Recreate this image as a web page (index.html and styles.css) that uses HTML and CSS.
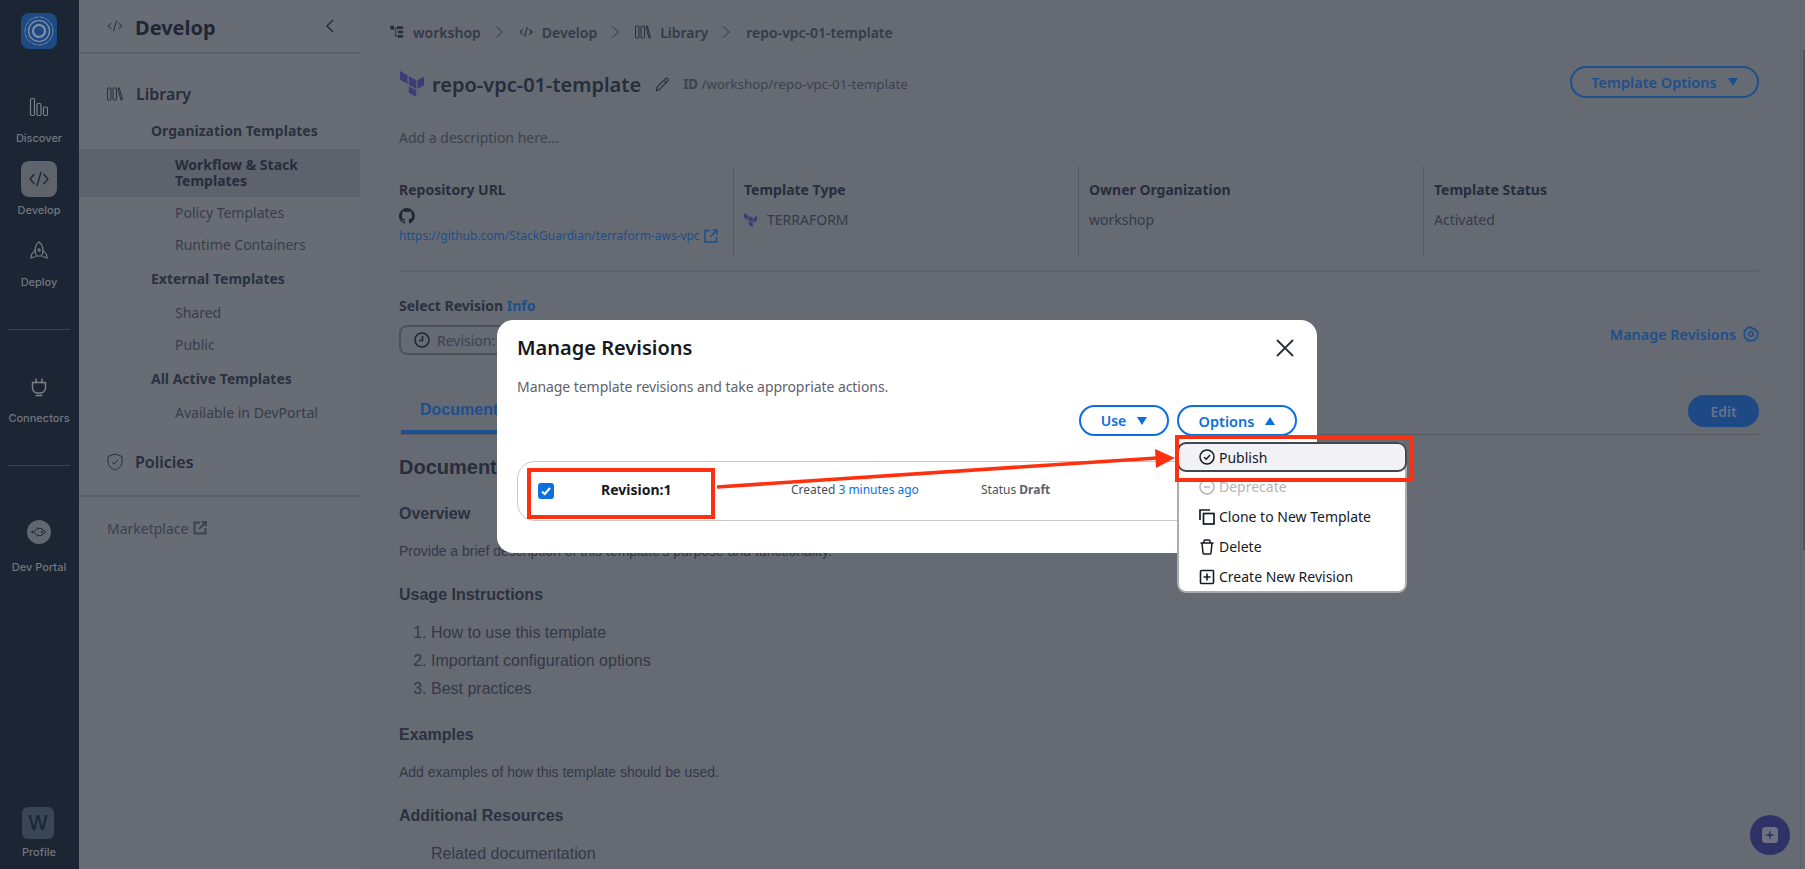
FILE: index.html
```html
<!DOCTYPE html>
<html lang="en">
<head>
<meta charset="utf-8">
<title>Manage Revisions</title>
<link rel="stylesheet" href="styles.css">
</head>
<body>
<div class="app">
  <nav class="rail">
    <div class="logo">
      <svg viewBox="0 0 36 36" width="36" height="36" fill="none" stroke="#8a93a5"><circle cx="18" cy="18" r="6" stroke-width="2"/><circle cx="18" cy="18" r="10.5" stroke-width="1.2"/><circle cx="18" cy="18" r="14" stroke-width=".8" stroke-dasharray="5 1"/></svg>
    </div>
    <a class="rail-item">
      <span class="rail-icon"><svg viewBox="0 0 20 20" width="20" height="20" fill="none" stroke="#7d8087" stroke-width="1.2"><rect x="1.5" y="1.5" width="4" height="17" rx="1.2"/><rect x="8" y="6.5" width="4" height="12" rx="1.2"/><rect x="14.5" y="10" width="4" height="8.5" rx="1.2"/></svg></span>
      <span class="rail-label">Discover</span>
    </a>
    <a class="rail-item">
      <span class="rail-icon active"><svg viewBox="0 0 20 20" width="20" height="20" fill="none" stroke="#1d2634" stroke-width="1.3"><path d="M5.5 5 1 10l4.500 5M14.500 5 19 10l-4.500 5M12 3 8 17"/></svg></span>
      <span class="rail-label">Develop</span>
    </a>
    <a class="rail-item">
      <span class="rail-icon"><svg viewBox="0 0 20 20" width="20" height="20" fill="none" stroke="#7d8087" stroke-width="1.100"><path d="M10 1c2.800 2.200 4 5.200 4 8.500 0 2-1 4-1.500 5.500h-5C7 13.500 6 11.500 6 9.500 6 6.200 7.200 3.200 10 1Z"/><path d="M6.500 9 2.500 13.500 2 17l4.500-1.500M13.500 9l4 4.500.5 3.500-4.500-1.500"/><circle cx="10" cy="9" r="1.100"/></svg></span>
      <span class="rail-label">Deploy</span>
    </a>
    <hr class="rail-rule">
    <a class="rail-item">
      <span class="rail-icon"><svg viewBox="0 0 20 20" width="20" height="20" fill="none" stroke="#7d8087" stroke-width="1.500"><path d="M7 1.500v5M13 1.500v5M3.500 5.500h13v5.500a5 5 0 0 1-5 5h-3a5 5 0 0 1-5-5Z"/><path d="M6.500 18.500h7"/></svg></span>
      <span class="rail-label">Connectors</span>
    </a>
    <hr class="rail-rule">
    <a class="rail-item portal">
      <span class="rail-icon"><span class="portal-disc"><svg viewBox="0 0 20 20" width="20" height="20" fill="none" stroke="#1d2634" stroke-width="1"><path d="M5 10c1.500-3 5-4.500 8-3l3.500 3-3.500 3c-3 1.500-6.500 0-8-3Z"/><path d="M8 5.500 10 7M8.500 14.500 10 13M3.500 8.500v3M2 9.300v1.400"/><circle cx="13" cy="10" r=".7"/></svg></span></span>
      <span class="rail-label">Dev Portal</span>
    </a>
    <a class="rail-item profile">
      <span class="profile-box">W</span>
      <span class="rail-label">Profile</span>
    </a>
  </nav>

  <aside class="side">
    <header class="side-head">
      <svg viewBox="0 0 16 16" width="16" height="16" fill="none" stroke="#262d3b" stroke-width="1"><path d="M4.500 5 1 8l3.500 3M11.500 5 15 8l-3.500 3M9.500 2.500l-3 11"/></svg>
      <h2 class="side-title">Develop</h2>
      <svg class="side-back" viewBox="0 0 10 16" width="10" height="16" fill="none" stroke="#262d3b" stroke-width="1.500"><path d="M8 2 2 8l6 6"/></svg>
    </header>
    <div class="side-body">
      <div class="lib-head">
        <svg viewBox="0 0 16 14" width="16" height="14" fill="none" stroke="#262d3b" stroke-width="1"><rect x=".5" y="1" width="3.500" height="12" rx=".8"/><rect x="6" y="1" width="3.500" height="12" rx=".8"/><path d="m11 1 1.200 0 3.300 11.500-1.600.5Z"/></svg>
        <span>Library</span>
      </div>
      <div class="nav-group">Organization Templates</div>
      <a class="nav-link current">Workflow &amp; Stack Templates</a>
      <a class="nav-link">Policy Templates</a>
      <a class="nav-link">Runtime Containers</a>
      <div class="nav-group">External Templates</div>
      <a class="nav-link">Shared</a>
      <a class="nav-link">Public</a>
      <div class="nav-group">All Active Templates</div>
      <a class="nav-link">Available in DevPortal</a>
      <div class="policies">
        <svg viewBox="0 0 16 18" width="16" height="18" fill="none" stroke="#262d3b" stroke-width="1"><path d="M8 1 15 3.500V9c0 4-3 6.500-7 8-4-1.500-7-4-7-8V3.500Z"/><path d="m5 9 2.200 2L11 7"/></svg>
        <span>Policies</span>
      </div>
      <a class="market">Marketplace
        <svg viewBox="0 0 14 14" width="14" height="14" fill="none" stroke="#3a4150" stroke-width="2"><path d="M7 1.500H1.500v11h11V7"/><path d="M6 8 12.500 1.500M8.500 1h4.500v4.500" stroke-width="1.800"/></svg>
      </a>
    </div>
  </aside>

  <main class="main">
    <div class="crumbs">
      <svg viewBox="0 0 16 16" width="14" height="14" fill="#262d3b"><circle cx="2.500" cy="3" r="2.500"/><path d="M8 1.500h7v3H8zM9 6.500h6v3H9zM9 11.500h6v3H9z"/><path d="M6 3h2v1H7v8h2v1H6z"/></svg>
      <span class="crumb">workshop</span>
      <span class="chev"></span>
      <svg viewBox="0 0 16 16" width="14" height="14" fill="none" stroke="#262d3b" stroke-width="1.200"><path d="M4.500 5 1 8l3.500 3M11.500 5 15 8l-3.500 3M9.500 2.500l-3 11"/></svg>
      <span class="crumb">Develop</span>
      <span class="chev"></span>
      <svg viewBox="0 0 16 14" width="16" height="14" fill="none" stroke="#262d3b" stroke-width="1"><rect x=".5" y="1" width="3.500" height="12" rx=".8"/><rect x="6" y="1" width="3.500" height="12" rx=".8"/><path d="m11 1 1.200 0 3.300 11.500-1.600.5Z"/></svg>
      <span class="crumb">Library</span>
      <span class="chev"></span>
      <span class="crumb">repo-vpc-01-template</span>
    </div>

    <div class="title-row">
      <svg class="tf-big" viewBox="0 0 24 26" width="24" height="26" fill="#3f3a78"><path d="M0 0 7.500 4.300v8.700L0 8.700zM8.800 5 16.300 9.300V18L8.800 13.700zM17.500 9.300 24 5.500v8.700l-6.500 3.800zM8.800 15.300l7.500 4.300V26l-7.500-4.300z"/></svg>
      <h1 class="page-title">repo-vpc-01-template</h1>
      <svg class="pencil" viewBox="0 0 16 16" width="15" height="15" fill="none" stroke="#2b3240" stroke-width="1.300"><path d="M2 11 11 2c1-1 2-.8 2.600-.2s.8 1.600-.2 2.600L4.500 13.500 1.500 14.500Z"/><path d="M9.500 3.500l3 3"/></svg>
      <span class="page-id"><b>ID</b> /workshop/repo-vpc-01-template</span>
      <button class="btn-outline-dim">Template Options <span class="tri-down"></span></button>
    </div>

    <p class="desc">Add a description here...</p>

    <div class="meta">
      <div class="meta-col">
        <div class="meta-label">Repository URL</div>
        <svg class="gh" viewBox="0 0 16 16" width="16" height="16" fill="#20262f"><path d="M8 0a8 8 0 0 0-2.500 15.600c.4.100.5-.2.500-.4v-1.400c-2.200.5-2.700-1-2.700-1-.4-.9-.9-1.200-.9-1.200-.7-.5.100-.5.100-.5.800.1 1.200.8 1.200.8.700 1.200 1.900.9 2.300.7.100-.5.300-.9.500-1.100-1.800-.2-3.600-.9-3.600-4 0-.9.300-1.600.8-2.100-.1-.2-.4-1 .1-2.100 0 0 .7-.2 2.200.8a7.600 7.600 0 0 1 4 0c1.500-1 2.200-.8 2.200-.8.400 1.100.2 1.900.1 2.100.5.600.8 1.300.8 2.100 0 3.100-1.900 3.700-3.700 3.900.3.300.6.800.6 1.500v2.200c0 .2.100.5.600.4A8 8 0 0 0 8 0Z"/></svg>
        <a class="repo-link">https://github.com/StackGuardian/terraform-aws-vpc
          <svg viewBox="0 0 14 14" width="14" height="14" fill="none" stroke="#1d4f8c" stroke-width="1.600"><path d="M6 1.500H1v11.500h11.500V8"/><path d="M6.500 7.500 12.500 1.500M8.500 1h4.500v4.500"/></svg>
        </a>
      </div>
      <div class="meta-col divided">
        <div class="meta-label">Template Type</div>
        <div class="meta-value"><svg viewBox="0 0 24 26" width="13" height="14" fill="#3f3a78"><path d="M0 0 7.500 4.300v8.700L0 8.700zM8.800 5 16.300 9.300V18L8.800 13.700zM17.500 9.300 24 5.500v8.700l-6.500 3.800zM8.800 15.300l7.500 4.300V26l-7.500-4.300z"/></svg>TERRAFORM</div>
      </div>
      <div class="meta-col divided">
        <div class="meta-label">Owner Organization</div>
        <div class="meta-value">workshop</div>
      </div>
      <div class="meta-col divided">
        <div class="meta-label">Template Status</div>
        <div class="meta-value">Activated</div>
      </div>
    </div>

    <div class="rev-label">Select Revision <a class="info">Info</a></div>
    <div class="rev-row">
      <div class="rev-select">
        <svg viewBox="0 0 16 16" width="16" height="16" fill="none" stroke="#20262f" stroke-width="1.500"><circle cx="8" cy="8" r="7"/><path d="M8.500 4v4.500H5"/></svg>
        Revision:1
      </div>
      <a class="manage-link">Manage Revisions
        <svg viewBox="0 0 16 16" width="16" height="16" fill="none" stroke="#1d4f8c" stroke-width="1.600"><path d="M8 1l1.400 1.800 2.300-.4.800 2.200 2.200.8-.4 2.300L15 8l-.7 1.300.4 2.300-2.200.8-.8 2.200-2.300-.4L8 15l-1.400-.8-2.300.4-.8-2.200-2.200-.8.400-2.300L1 8l.7-1.300-.4-2.300 2.200-.8.8-2.200 2.300.4Z"/><circle cx="8" cy="8" r="2.200"/></svg>
      </a>
    </div>

    <div class="tabs">
      <span class="tab">Documentation</span>
      <button class="btn-edit">Edit</button>
    </div>

    <article class="doc">
      <h2>Documentation</h2>
      <h3>Overview</h3>
      <p>Provide a brief description of this template's purpose and functionality.</p>
      <h3>Usage Instructions</h3>
      <ol>
        <li>How to use this template</li>
        <li>Important configuration options</li>
        <li>Best practices</li>
      </ol>
      <h3>Examples</h3>
      <p>Add examples of how this template should be used.</p>
      <h3>Additional Resources</h3>
      <ul>
        <li>Related documentation</li>
      </ul>
    </article>
  </main>
  <div class="gutter"><div class="thumb"></div></div>
</div>

<section class="modal">
  <h2 class="modal-title">Manage Revisions</h2>
  <svg class="modal-close" viewBox="0 0 18 18" width="18" height="18" fill="none" stroke="#2a2f3a" stroke-width="1.800"><path d="M1 1l16 16M17 1 1 17"/></svg>
  <p class="modal-sub">Manage template revisions and take appropriate actions.</p>
  <div class="modal-actions">
    <button class="btn-blue btn-use">Use <span class="tri-down"></span></button>
    <button class="btn-blue btn-opts">Options <span class="tri-up"></span></button>
  </div>
  <div class="rev-card">
    <span class="check"><svg viewBox="0 0 16 16" width="16" height="16" fill="none" stroke="#fff" stroke-width="2"><path d="m4 8.500 2.800 2.500L12 5"/></svg></span>
    <span class="rev-name">Revision:1</span>
    <span class="rev-created">Created <a>3 minutes ago</a></span>
    <span class="rev-status">Status <b>Draft</b></span>
  </div>
</section>

<div class="menu">
  <div class="menu-item selected">
    <svg viewBox="0 0 16 16" width="16" height="16" fill="none" stroke="#16191f" stroke-width="1.500"><circle cx="8" cy="8" r="7"/><path d="m5 8.300 2.200 2L11 6"/></svg>Publish
  </div>
  <div class="menu-item disabled">
    <svg viewBox="0 0 16 16" width="16" height="16" fill="none" stroke="#b5b5ba" stroke-width="1.500"><circle cx="8" cy="8" r="7"/><path d="M5 8h6"/></svg>Deprecate
  </div>
  <div class="menu-item">
    <svg viewBox="0 0 16 16" width="16" height="16" fill="none" stroke="#16191f" stroke-width="1.700"><path d="M1 11V1h10"/><rect x="4.500" y="4.500" width="10.500" height="10.500"/></svg>Clone to New Template
  </div>
  <div class="menu-item">
    <svg viewBox="0 0 16 16" width="16" height="16" fill="none" stroke="#16191f" stroke-width="1.500"><path d="M1.500 4h13M5 4V2a1 1 0 0 1 1-1h4a1 1 0 0 1 1 1v2M3 4l1 10a1 1 0 0 0 1 1h6a1 1 0 0 0 1-1l1-10"/></svg>Delete
  </div>
  <div class="menu-item">
    <svg viewBox="0 0 16 16" width="16" height="16" fill="none" stroke="#16191f" stroke-width="1.600"><rect x="1.500" y="1.500" width="13" height="13" rx="1"/><path d="M8 4.500v7M4.500 8h7"/></svg>Create New Revision
  </div>
</div>

<div class="mark mark-rev"></div>
<div class="mark mark-pub"></div>
<svg class="arrow" viewBox="0 0 470 40" width="470" height="40" fill="#ff3010" stroke="none">
  <path d="M2 34.200 442 5.200 442 8.800 2 37.800Z"/>
  <path d="M440 -2 460 7 441 17Z"/>
</svg>

<div class="fab"><svg viewBox="0 0 16 16" width="16" height="16"><rect width="16" height="16" rx="3.500" fill="#6f7180"/><path d="M8 2.500 9 7l4.500 1L9 9l-1 4.500L7 9 2.500 8 7 7Z" fill="#2e3266"/></svg></div>
</body>
</html>
```

FILE: styles.css
```css
* { box-sizing: border-box; }
html, body { margin: 0; height: 100%; overflow: hidden; }
body { font-family: "Noto Sans", "Open Sans", sans-serif; background: #666a73; color: #262d3b; position: relative; }
svg { flex: none; display: block; }
h1, h2, h3, p { margin: 0; }

.app { display: flex; height: 869px; }

/* icon rail */
.rail { width: 79px; flex: none; background: #1b2533; display: flex; flex-direction: column; align-items: center; padding: 13px 1px 0 0; }
.logo { width: 36px; height: 36px; border-radius: 8px; background: #1e4a86; margin-bottom: 40px; }
.rail-item { display: flex; flex-direction: column; align-items: center; width: 100%; margin-bottom: 15px; }
.rail-icon { width: 36px; height: 36px; display: flex; align-items: center; justify-content: center; border-radius: 8px; }
.rail-icon.active { background: #5f636b; }
.rail-label { font-family: Inter, sans-serif; font-size: 11px; font-weight: 500; line-height: 16px; margin-top: 5px; color: #74777f; white-space: nowrap; }
.rail-rule { width: 62px; border: 0; border-top: 1px solid #3a4350; margin: 24px 0 39px; flex: none; }
.portal { margin: 9px 0 0; }
.portal-disc { width: 24px; height: 24px; border-radius: 50%; background: #62666e; display: flex; align-items: center; justify-content: center; }
.portal .rail-label { margin-top: 9px; }
.profile { margin-top: auto; margin-bottom: 9px; }
.profile-box { width: 32px; height: 32px; border-radius: 6px; background: #3b4654; color: #1d2634; font-family: Inter, sans-serif; font-weight: 500; font-size: 20px; line-height: 32px; text-align: center; margin-left: -2px; }
.profile .rail-label { margin-top: 5px; }

/* second column */
.side { width: 281px; flex: none; background: #686c74; display: flex; flex-direction: column; }
.side-head { height: 54px; flex: none; display: flex; align-items: center; gap: 12px; padding: 0 25px 0 28px; border-bottom: 2px solid #5d616b; }
.side-title { font-size: 20px; font-weight: 700; color: #1f2735; line-height: 24px; margin-top: 4px; }
.side-back { margin-left: auto; }
.side-body { padding-top: 29px; }
.lib-head { display: flex; align-items: center; gap: 13px; padding-left: 28px; height: 22px; font-size: 16px; font-weight: 600; color: #262d3b; }
.nav-group { padding-left: 72px; height: 34px; line-height: 34px; margin: 1px 0; font-size: 14px; font-weight: 700; color: #2a3140; }
.lib-head + .nav-group { margin-top: 9px; }
.nav-link { display: block; padding-left: 96px; padding-right: 40px; height: 32px; line-height: 32px; font-size: 14px; color: #373d4b; }
.nav-link.current { height: 48px; line-height: 16px; padding-top: 8px; font-weight: 700; background: #5e626c; color: #262d3b; }
.policies { display: flex; align-items: center; gap: 12px; padding-left: 28px; height: 68px; border-bottom: 2px solid #5d616b; font-size: 16px; font-weight: 600; color: #262d3b; }
.market { display: flex; align-items: center; gap: 5px; padding-left: 28px; margin-top: 20px; height: 22px; font-size: 14px; color: #3a4150; }

/* main column */
.main { flex: 1; min-width: 0; padding: 0 41px 0 39px; background: #666a73; }
.gutter { width: 5px; flex: none; margin-top: 43px; border-left: 1px solid #5d616b; }
.thumb { width: 2px; height: 500px; margin: 7px 0 0 auto; background: #4f535c; }
.crumbs { display: flex; align-items: center; height: 22px; margin-top: 21px; font-size: 14px; font-weight: 600; color: #343a48; }
.crumbs svg { margin-right: 9px; }
.crumbs > svg:first-child { margin-left: -9px; }
.crumb { white-space: nowrap; }
.chev { width: 8px; height: 8px; border-top: 1.500px solid #3f4553; border-right: 1.500px solid #3f4553; transform: rotate(45deg); margin: 0 18px 0 12px; flex: none; }
.title-row { display: flex; align-items: center; height: 32px; margin-top: 25px; }
.tf-big { margin-left: 1px; }
.page-title { font-size: 20px; font-weight: 600; color: #262d3b; margin-left: 8px; white-space: nowrap; }
.pencil { margin-left: 14px; }
.page-id { font-size: 13.3px; color: #3c4250; margin-left: 13px; white-space: nowrap; }
.page-id b { font-weight: 700; }
.btn-outline-dim { margin: -4px 0 0 auto; width: 189px; height: 32px; border-radius: 16px; background: transparent; border: 2px solid #1d4f8c; color: #1d4f8c; font-family: inherit; font-size: 14.5px; font-weight: 600; display: flex; align-items: center; justify-content: center; gap: 11px; padding: 0; }
.tri-down, .tri-up { display: inline-block; width: 0; height: 0; border-left: 5.500px solid transparent; border-right: 5.500px solid transparent; flex: none; }
.tri-down { border-top: 8px solid currentColor; }
.tri-up { border-bottom: 8px solid currentColor; }
.desc { margin-top: 28px; font-size: 14px; line-height: 20px; color: #3c4250; }
.meta { display: grid; grid-template-columns: repeat(4, 345px); height: 90px; margin-top: 18px; width: 100%; }
.meta-col { padding-top: 14px; }
.meta-col.divided { border-left: 1px solid #565a64; margin-left: -11px; padding-left: 10px; margin-right: 11px; }
.meta-label { font-size: 14px; line-height: 20px; font-weight: 700; color: #262d3b; }
.gh { margin-top: 8px; }
.repo-link { display: flex; align-items: center; gap: 4px; font-size: 12px; line-height: 16px; margin-top: 4px; color: #1d4f8c; white-space: nowrap; }
.meta-value { display: flex; align-items: center; gap: 10px; font-size: 14px; line-height: 20px; margin-top: 10px; color: #343a48; }
.rev-label { height: 46px; margin-top: 14px; padding-top: 24px; border-top: 2px solid #5d616b; font-size: 14px; line-height: 20px; font-weight: 700; color: #2a3140; }
.info { color: #1d4f8c; }
.rev-row { display: flex; align-items: flex-start; justify-content: space-between; height: 30px; margin-top: 9px; }
.rev-select { display: flex; align-items: center; gap: 7px; width: 220px; height: 30px; padding-left: 13px; border: 2px solid #4c505a; border-radius: 8px; font-size: 14px; color: #3c4250; }
.manage-link { display: flex; align-items: center; gap: 7px; height: 20px; margin-top: -1px; font-size: 14.4px; font-weight: 600; color: #1d4f8c; }
.tabs { display: flex; align-items: flex-start; justify-content: space-between; height: 80px; padding-top: 43px; border-bottom: 1px solid #575b65; }
.tab { font-family: "Liberation Sans", Arial, sans-serif; font-weight: 700; font-size: 16px; line-height: 24px; color: #1d4f8c; padding: 0 19px; border-bottom: 4px solid #1d4f8c; margin-left: 2px; height: 36px; }
.btn-edit { width: 71px; height: 32px; border: 0; border-radius: 16px; background: #1d4a84; color: #64728a; font-family: inherit; font-size: 14px; font-weight: 600; margin-top: -3px; }
.doc { font-family: "Liberation Sans", Arial, sans-serif; color: #2e3442; }
.doc h2 { font-size: 20px; line-height: 28px; margin-top: 18px; color: #262d3b; }
.doc h3 { font-size: 16px; line-height: 24px; margin-top: 20px; color: #2a3140; }
.doc h2 + h3 { margin-top: 21px; }
.doc p { font-size: 14px; line-height: 20px; margin-top: 15px; color: #333947; }
.doc p + h3 { margin-top: 22px; }
.doc ol, .doc ul { margin: 12px 0 0; padding: 0 0 0 32px; font-size: 16px; line-height: 28px; color: #333947; }
.doc ul { list-style: none; }

/* dialog */
.modal { position: absolute; left: 497px; top: 320px; width: 820px; height: 233px; background: #fff; border-radius: 16px; padding: 16px 20px 0; color: #16191f; }
.modal-title { font-size: 20px; font-weight: 600; line-height: 24px; }
.modal-close { position: absolute; right: 23px; top: 19px; }
.modal-sub { font-size: 14px; line-height: 20px; margin-top: 17px; color: #5f626b; letter-spacing: -.06px; }
.modal-actions { display: flex; justify-content: flex-end; gap: 8px; margin-top: 8px; }
.btn-blue { height: 31px; border-radius: 16px; background: #fff; border: 2px solid #0b6fe0; color: #0b6fe0; font-family: inherit; font-size: 14px; font-weight: 600; display: flex; align-items: center; justify-content: center; gap: 11px; padding: 0; }
.btn-use { width: 90px; }
.btn-opts { width: 120px; font-size: 14.5px; }
.rev-card { position: relative; display: flex; align-items: center; height: 60px; margin-top: 25px; border: 1px solid #c6c6ce; border-radius: 18px; padding-left: 20px; font-size: 12px; }
.check { width: 16px; height: 16px; border-radius: 3px; background: #0b6fe0; flex: none; }
.rev-name { margin: 0 0 4px 47px; font-size: 14px; font-weight: 700; width: 190px; flex: none; }
.rev-created { color: #4c4f58; width: 190px; flex: none; margin-bottom: 4px; }
.rev-created a { color: #0b6fe0; }
.rev-status { color: #4c4f58; margin-bottom: 4px; }
.rev-status b { font-weight: 700; color: #5f626b; }

/* dropdown */
.menu { position: absolute; left: 1177px; top: 442px; width: 230px; height: 151px; background: #fff; border: 2px solid #aaacb3; border-top: 0; border-radius: 9px; font-size: 14px; color: #16191f; }
.menu-item { display: flex; align-items: center; gap: 4px; height: 30px; padding: 0 0 2px 20px; }
.menu-item svg { margin-top: 2px; }
.menu-item.selected { margin: 0 -2px; padding-bottom: 0; background: #f1f1f6; border: 2px solid #44464f; border-radius: 9px; }
.menu-item.selected svg { margin-top: 0; }
.menu-item.disabled { color: #b5b5ba; }

/* annotations */
.mark { position: absolute; border: 4px solid #ff3010; }
.mark-rev { left: 527px; top: 468px; width: 188px; height: 51px; }
.mark-pub { left: 1175px; top: 435px; width: 239px; height: 47px; }
.arrow { position: absolute; left: 715px; top: 451px; overflow: visible; }

.fab { position: absolute; left: 1750px; top: 815px; width: 40px; height: 40px; border-radius: 50%; background: #2e3266; display: flex; align-items: center; justify-content: center; }
```
